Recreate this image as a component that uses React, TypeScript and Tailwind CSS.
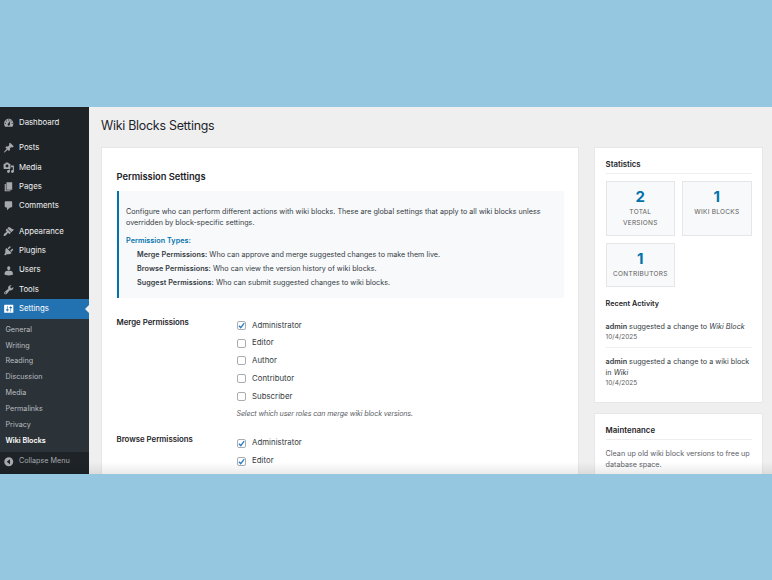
import React from "react";

const ICONS = {
  dashboard:
    "M3.76 17h12.48c1.14-1.53 1.82-3.42 1.82-5.47C18.06 6.82 14.45 3 10 3S1.94 6.82 1.94 11.53c0 2.05.68 3.94 1.82 5.47zM10 4c.55 0 1 .45 1 1s-.45 1-1 1-1-.45-1-1 .45-1 1-1zM6 6c.55 0 1 .45 1 1s-.45 1-1 1-1-.45-1-1 .45-1 1-1zm8 0c.55 0 1 .45 1 1s-.45 1-1 1-1-.45-1-1 .45-1 1-1zm-5.37 5.55L12 7v6c0 1.1-.9 2-2 2s-2-.9-2-2c0-.57.24-1.08.63-1.45zM4 10c.55 0 1 .45 1 1s-.45 1-1 1-1-.45-1-1 .45-1 1-1zm12 0c.55 0 1 .45 1 1s-.45 1-1 1-1-.45-1-1 .45-1 1-1z",
  posts:
    "M10.44 3.02l1.82-1.82 6.36 6.35-1.83 1.82c-1.05-.68-2.48-.57-3.41.36l-.75.75c-.92.93-1.04 2.35-.35 3.41l-1.83 1.82-2.41-2.41-2.8 2.79c-.42.42-3.38 2.71-3.8 2.29s1.86-3.39 2.28-3.81l2.79-2.79L4.1 9.36l1.83-1.82c1.05.69 2.48.57 3.4-.36l.75-.75c.93-.92 1.05-2.35.36-3.41z",
  media:
    "M13 11V4c0-.55-.45-1-1-1h-1.67L9 1H5L3.67 3H2c-.55 0-1 .45-1 1v7c0 .55.45 1 1 1h10c.55 0 1-.45 1-1zM7 4.5c1.38 0 2.5 1.12 2.5 2.5S8.38 9.5 7 9.5 4.5 8.38 4.5 7 5.62 4.5 7 4.5zM14 6h5v10.5c0 1.38-1.12 2.5-2.5 2.5S14 17.88 14 16.5s1.12-2.5 2.5-2.5c.17 0 .34.02.5.05V9h-3V6zm-4 8.05V13h2v3.5c0 1.38-1.12 2.5-2.5 2.5S7 17.88 7 16.5 8.12 14 9.5 14c.17 0 .34.02.5.05z",
  pages: "M6 15V2h10v13H6zm-1 1h8v2H3V5h2v11z",
  comments:
    "M5 2h9c1.1 0 2 .9 2 2v7c0 1.1-.9 2-2 2h-2l-5 5v-5H5c-1.1 0-2-.9-2-2V4c0-1.1.9-2 2-2z",
  appearance:
    "M14.48 11.06L7.41 3.99l1.5-1.5c.5-.56 2.3-.47 3.51.32 1.21.8 1.43 1.28 2.91 2.1 1.18.64 2.45 1.26 4.45.85zm-.71.71L6.7 4.7 4.93 6.47c-.39.39-.39 1.02 0 1.41l1.06 1.06c.39.39.39 1.03 0 1.42-.6.6-1.43 1.11-2.21 1.69-.35.26-.7.53-1.01.84C1.43 14.23.4 16.08 1.4 17.07c.99 1 2.84-.03 4.18-1.36.31-.31.58-.66.85-1.02.57-.78 1.08-1.61 1.69-2.21.39-.39 1.02-.39 1.41 0l1.06 1.06c.39.39 1.02.39 1.41 0z",
  plugins:
    "M13.11 4.36L9.87 7.6 8 5.73l3.24-3.24c.35-.34 1.05-.2 1.56.32.52.51.66 1.21.31 1.55zm-8 1.77l.91-1.12 9.01 9.01-1.19.84c-.71.71-2.63 1.16-3.82 1.16H6.14L4.9 17.26c-.59.59-1.54.59-2.12 0-.59-.58-.59-1.53 0-2.12l1.24-1.24v-3.88c0-1.13.4-3.19 1.09-3.89zm7.26 3.97l3.24-3.24c.34-.35 1.04-.21 1.55.31.52.51.66 1.21.31 1.55l-3.24 3.25z",
  users:
    "M10 9.25c-2.27 0-2.73-3.44-2.73-3.44C7 4.02 7.82 2 9.97 2c2.16 0 2.98 2.02 2.71 3.81 0 0-.41 3.44-2.68 3.44zM7.3 10h5.42c2.39 0 4.52 2.33 4.52 4.53v2.49s-3.65 1.13-7.24 1.13c-3.65 0-7.24-1.13-7.24-1.13v-2.49C2.76 12.28 4.77 10 7.3 10z",
  tools:
    "M16.68 9.77c-1.34 1.34-3.3 1.67-4.95.99l-5.41 6.52c-.99.99-2.59.99-3.58 0s-.99-2.59 0-3.57l6.52-5.42c-.68-1.65-.35-3.61.99-4.95 1.28-1.28 3.12-1.62 4.72-1.06l-2.89 2.89 2.82 2.82 2.86-2.87c.53 1.58.18 3.39-1.08 4.65zM3.81 16.21c.4.39 1.04.39 1.43 0 .4-.4.4-1.04 0-1.43-.39-.4-1.03-.4-1.43 0-.39.39-.39 1.03 0 1.43z",
  settings:
    "M18 16V4c0-.55-.45-1-1-1H3c-.55 0-1 .45-1 1v12c0 .55.45 1 1 1h14c.55 0 1-.45 1-1zM8 11h1c.55 0 1 .45 1 1s-.45 1-1 1H8v1.5c0 .28-.22.5-.5.5s-.5-.22-.5-.5V13H6c-.55 0-1-.45-1-1s.45-1 1-1h1V5.5c0-.28.22-.5.5-.5s.5.22.5.5V11zm5-2h-1c-.55 0-1-.45-1-1s.45-1 1-1h1V5.5c0-.28.22-.5.5-.5s.5.22.5.5V7h1c.55 0 1 .45 1 1s-.45 1-1 1h-1v5.5c0 .28-.22.5-.5.5s-.5-.22-.5-.5V9z",
  collapse:
    "M10 2.2a7.8 7.8 0 1 0 0 15.6a7.8 7.8 0 0 0 0-15.6zM12.2 5.8v8.4L6.4 10z",
};

type IconName = keyof typeof ICONS;

function Icon({ name }: { name: IconName }) {
  return (
    <svg viewBox="0 0 20 20" className="size-[11.5px] shrink-0" fill="currentColor" fillRule="evenodd">
      <path d={ICONS[name]} />
    </svg>
  );
}

function MenuItem({ icon, label }: { icon: IconName; label: string }) {
  return (
    <li className="flex h-[19.35px] items-center gap-[4.5px] pl-[3px] text-[7.8px] text-[#f0f0f1]">
      <span className="flex text-[#a7aaad]">
        <Icon name={icon} />
      </span>
      {label}
    </li>
  );
}

const SUBMENU = ["General", "Writing", "Reading", "Discussion", "Media", "Permalinks", "Privacy"];

function Sidebar() {
  return (
    <nav className="flex w-[89px] shrink-0 flex-col bg-[#1d2327]">
      <ul className="pt-[6.2px]">
        <MenuItem icon="dashboard" label="Dashboard" />
      </ul>
      <ul className="pt-[6px]">
        <MenuItem icon="posts" label="Posts" />
        <MenuItem icon="media" label="Media" />
        <MenuItem icon="pages" label="Pages" />
        <MenuItem icon="comments" label="Comments" />
      </ul>
      <ul className="pt-[6px]">
        <MenuItem icon="appearance" label="Appearance" />
        <MenuItem icon="plugins" label="Plugins" />
        <MenuItem icon="users" label="Users" />
        <MenuItem icon="tools" label="Tools" />
      </ul>
      <div className="flex h-[19.3px] items-center gap-[4.5px] bg-[#2271b1] pl-[3px] text-[7.8px] text-white">
        <Icon name="settings" />
        Settings
        <span className="ml-auto border-y-[4.5px] border-r-[4.5px] border-y-transparent border-r-[#f0f0f1]" />
      </div>
      <ul className="bg-[#2c3338] pt-[3.6px] pb-[2.8px] pl-[5.5px] text-[7.2px] text-[#b9bdc1]">
        {SUBMENU.map((s) => (
          <li key={s} className="flex h-[15.88px] items-center">
            {s}
          </li>
        ))}
        <li className="flex h-[15.88px] items-center font-semibold text-white">Wiki Blocks</li>
      </ul>
      <div className="flex h-[19px] items-center gap-[4.5px] pl-[3px] text-[7.2px] text-[#a7aaad]">
        <Icon name="collapse" />
        Collapse Menu
      </div>
    </nav>
  );
}

function Box({ on }: { on?: boolean }) {
  return (
    <span className="flex size-[9px] items-center justify-center rounded-[2px] border border-[#a9adb1] bg-white">
      {on && (
        <svg viewBox="0 0 10 10" className="size-[7px] shrink-0" fill="none" stroke="#2f80c8" strokeWidth="2">
          <path d="M1.2 5.2 4 8 8.8 1.6" />
        </svg>
      )}
    </span>
  );
}

function Check({ label, on }: { label: string; on?: boolean }) {
  return (
    <label className="flex h-[17.75px] items-center gap-[6.5px] text-[7.8px] tracking-[0.03px] text-[#343b42]">
      <Box on={on} />
      {label}
    </label>
  );
}

function Stat({ value, label }: { value: string; label: string }) {
  return (
    <div className="flex flex-col items-center border border-[#e4e6e8] bg-[#f8f9fa] px-[6px] pt-[6.4px] pb-[6.3px]">
      <div className="text-[15px] leading-[17px] font-bold text-[#0073aa]">{value}</div>
      <div className="mt-[2.1px] text-center text-[6.5px] leading-[10.6px] tracking-[0.28px] text-[#5c5c5c] uppercase">
        {label}
      </div>
    </div>
  );
}

const CARD = "border border-[#e6e7ea] bg-white";

export default function App() {
  return (
    <div className="h-[580px] w-[772px] overflow-hidden bg-[#96c7e1] pt-[107px] font-['Inter','Liberation_Sans',sans-serif] text-[7.2px] text-[#343b42]">
      <div className="relative flex h-[366.5px] overflow-hidden bg-[#efeff0]">
        <Sidebar />
        <main className="flex min-w-0 flex-1 flex-col pl-[12px]">
          <h1 className="flex h-[40px] shrink-0 items-center pb-[2px] text-[12.4px] tracking-[-0.25px] text-[#1d2327]">
            Wiki Blocks Settings
          </h1>
          <div className="flex min-h-0 flex-1">
            <section className={`${CARD} w-[478px] shrink-0 overflow-hidden border-b-0 pr-[14px] pl-[14.5px]`}>
              <h2 className="mt-[22px] text-[9.4px] leading-[14px] font-semibold tracking-[-0.05px] text-[#1d2327]">
                Permission Settings
              </h2>
              <div className="mt-[7px] h-[107px] border-l-[2.5px] border-[#0073aa] bg-[#f8f9fb] pt-[14.6px] pl-[7.5px]">
                <p className="leading-[11px] tracking-[0.006px] whitespace-nowrap">
                  Configure who can perform different actions with wiki blocks. These are global settings that apply to all wiki blocks unless
                  <br />
                  overridden by block-specific settings.
                </p>
                <p className="mt-[7.2px] leading-[12px] font-semibold tracking-[0.05px] text-[#0073aa]">
                  Permission Types:
                </p>
                <ul className="mt-[1.2px] pl-[11px] leading-[13.9px]">
                  <li>
                    <b className="font-semibold tracking-[0.07px]">Merge Permissions:</b> Who can approve and merge suggested changes to make them live.
                  </li>
                  <li>
                    <b className="font-semibold tracking-[0.07px]">Browse Permissions:</b> Who can view the version history of wiki blocks.
                  </li>
                  <li>
                    <b className="font-semibold tracking-[0.07px]">Suggest Permissions:</b> Who can submit suggested changes to wiki blocks.
                  </li>
                </ul>
              </div>
              <div className="mt-[18.5px] flex">
                <div className="w-[120px] text-[7.8px] leading-[10px] font-semibold text-[#1d2327]">
                  Merge Permissions
                </div>
                <div>
                  <Check label="Administrator" on />
                  <Check label="Editor" />
                  <Check label="Author" />
                  <Check label="Contributor" />
                  <Check label="Subscriber" />
                  <p className="mt-[3px] text-[7.1px] leading-[12px] tracking-[-0.13px] text-[#5b6066] italic">
                    Select which user roles can merge wiki block versions.
                  </p>
                </div>
              </div>
              <div className="mt-[14.2px] flex">
                <div className="w-[120px] text-[7.8px] leading-[10px] font-semibold text-[#1d2327]">
                  Browse Permissions
                </div>
                <div>
                  <Check label="Administrator" on />
                  <Check label="Editor" on />
                  <div className="flex h-[17.75px] items-center">
                    <Box />
                  </div>
                </div>
              </div>
            </section>
            <aside className="ml-[15px] flex w-[168.5px] flex-col">
              <section className={`${CARD} h-[255.5px] shrink-0 pr-[10px] pl-[10.6px]`}>
                <h3 className="mt-[9.5px] h-[16px] border-b border-[#eeeeef] text-[7.8px] leading-[12px] font-semibold text-[#1d2327]">
                  Statistics
                </h3>
                <div className="mt-[7.5px] grid grid-cols-[69.5px_69.5px] gap-[7px]">
                  <Stat value="2" label="Total Versions" />
                  <Stat value="1" label="Wiki Blocks" />
                  <Stat value="1" label="Contributors" />
                </div>
                <h4 className="mt-[10.5px] leading-[12px] font-semibold tracking-[0.05px] text-[#1d2327]">
                  Recent Activity
                </h4>
                <div className="mt-[11.5px] border-b border-[#f0f0f1] pb-[4.5px] whitespace-nowrap">
                  <p className="leading-[11px] tracking-[0.02px]">
                    <b className="font-semibold">admin</b> suggested a change to <em>Wiki Block</em>
                  </p>
                  <p className="text-[6.5px] leading-[10.5px] text-[#5c5c5c]">10/4/2025</p>
                </div>
                <div className="mt-[9px] whitespace-nowrap">
                  <p className="leading-[10.4px] tracking-[0.02px]">
                    <b className="font-semibold">admin</b> suggested a change to a wiki block
                    <br />
                    in <em>Wiki</em>
                  </p>
                  <p className="text-[6.5px] leading-[10.5px] text-[#5c5c5c]">10/4/2025</p>
                </div>
              </section>
              <section className={`${CARD} mt-[10.5px] flex-1 border-b-0 pr-[10px] pl-[10.6px]`}>
                <h3 className="mt-[9.5px] h-[16px] border-b border-[#eeeeef] text-[7.8px] leading-[12px] font-semibold tracking-[0.05px] text-[#1d2327]">
                  Maintenance
                </h3>
                <p className="mt-[8.2px] leading-[11px] whitespace-nowrap text-[#5b6066]">
                  Clean up old wiki block versions to free up
                  <br />
                  database space.
                </p>
              </section>
            </aside>
          </div>
        </main>
        <div className="absolute inset-x-0 bottom-0 h-[12px] bg-gradient-to-b from-transparent to-black/8" />
      </div>
    </div>
  );
}
